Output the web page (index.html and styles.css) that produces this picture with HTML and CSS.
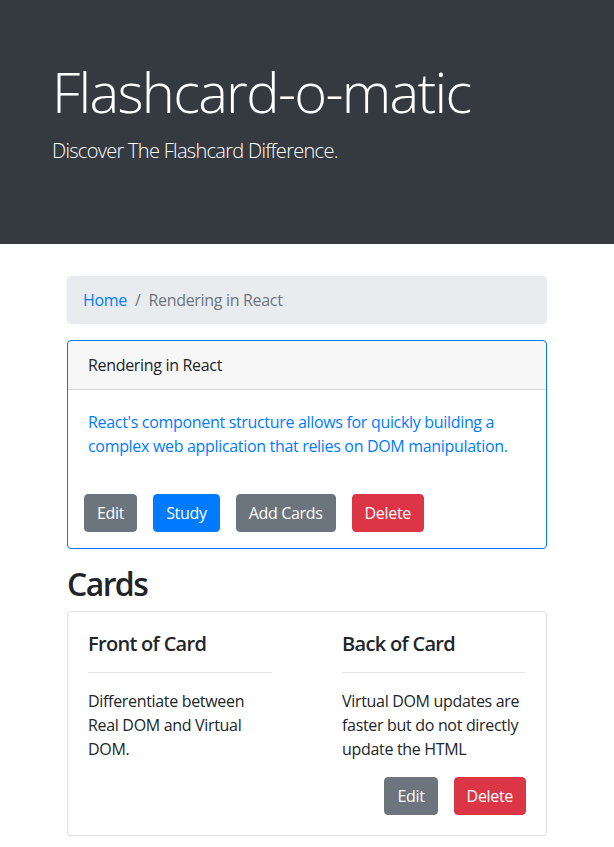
FILE: index.html
```html
<!DOCTYPE html>
<html lang="en">
<head>
<meta charset="utf-8">
<title>Flashcard-o-matic</title>
<link rel="stylesheet" href="styles.css">
</head>
<body>
<header class="jumbotron">
  <div class="jumbo-inner">
    <h1 class="display">Flashcard-o-matic</h1>
    <p class="lead">Discover The Flashcard Difference.</p>
  </div>
</header>
<main class="page">
  <nav class="breadcrumb">
    <a class="crumb-link" href="#">Home</a>
    <span class="crumb-sep">/</span>
    <span class="crumb-active">Rendering in React</span>
  </nav>

  <section class="card card-primary">
    <div class="card-header">Rendering in React</div>
    <div class="card-body">
      <p class="deck-desc">React's component structure allows for quickly building a complex web application that relies on DOM manipulation.</p>
      <div class="deck-actions">
        <button class="btn btn-secondary">Edit</button>
        <button class="btn btn-primary">Study</button>
        <button class="btn btn-secondary">Add Cards</button>
        <button class="btn btn-danger">Delete</button>
      </div>
    </div>
  </section>

  <h2 class="section-title">Cards</h2>

  <section class="card">
    <div class="card-body">
      <div class="card-cols">
        <div class="card-col">
          <h5 class="col-title">Front of Card</h5>
          <hr class="rule">
          <p class="col-text">Differentiate between Real DOM and Virtual DOM.</p>
        </div>
        <div class="card-col">
          <h5 class="col-title">Back of Card</h5>
          <hr class="rule">
          <p class="col-text">Virtual DOM updates are faster but do not directly update the HTML</p>
          <div class="card-actions">
            <button class="btn btn-secondary">Edit</button>
            <button class="btn btn-danger">Delete</button>
          </div>
        </div>
      </div>
    </div>
  </section>
</main>
</body>
</html>
```
FILE: styles.css
```css
*, *::before, *::after { box-sizing: border-box; }

html, body {
  margin: 0;
  padding: 0;
}

body {
  font-family: "Open Sans", "Noto Sans", "DejaVu Sans", sans-serif;
  font-size: 16px;
  line-height: 1.5;
  color: #212529;
  background: #fff;
  letter-spacing: -0.02em;
}

.jumbotron {
  background: #343a40;
  color: #fff;
  padding: 58px 0 62px;
  margin-bottom: 32px;
}

.jumbo-inner {
  max-width: 540px;
  margin: 0 auto;
  padding: 0 15px;
}

.display {
  margin: 0 0 11px;
  font-size: 56px;
  font-weight: 300;
  line-height: 1.2;
  letter-spacing: -0.03em;
}

.lead {
  margin: 0 0 16px;
  font-size: 20px;
  font-weight: 300;
  line-height: 1.5;
  letter-spacing: -0.035em;
}

.page {
  max-width: 540px;
  margin: 0 auto;
  padding: 0 30px;
}

.breadcrumb {
  display: flex;
  align-items: center;
  background: #e9ecef;
  border-radius: 4px;
  padding: 12px 16px;
  margin-bottom: 16px;
  color: #6c757d;
}

.crumb-link {
  color: #007bff;
  text-decoration: none;
}

.crumb-sep {
  padding: 0 8px;
  color: #6c757d;
}

.crumb-active { color: #6c757d; }

.card {
  border: 1px solid rgba(0,0,0,.125);
  border-radius: 4px;
  background: #fff;
  margin-bottom: 16px;
}

.card-primary { border-color: #007bff; }

.card-header {
  padding: 12px 20px;
  background: rgba(0,0,0,.03);
  border-bottom: 1px solid rgba(0,0,0,.125);
}

.card-body { padding: 20px; }

.deck-desc {
  margin: 0;
  color: #007bff;
}

.deck-actions {
  display: flex;
  gap: 16px;
  margin: 36px -4px -4px;
}

.btn {
  font-family: inherit;
  font-size: 16px;
  line-height: 1.5;
  letter-spacing: inherit;
  padding: 6px 12px;
  border: 1px solid transparent;
  border-radius: 4px;
  color: #fff;
  cursor: pointer;
}

.btn-secondary { background: #6c757d; border-color: #6c757d; }
.btn-primary { background: #007bff; border-color: #007bff; }
.btn-danger { background: #dc3545; border-color: #dc3545; }

.section-title {
  margin: 0 0 7px;
  font-size: 32px;
  font-weight: 600;
  line-height: 1.2;
  letter-spacing: -0.05em;
}

.card-cols {
  display: flex;
  justify-content: space-between;
}

.card-col { width: 42%; }

.col-title {
  margin: 0 0 8px;
  font-size: 20px;
  font-weight: 600;
  line-height: 1.2;
  letter-spacing: -0.035em;
}

.rule {
  margin: 16px 0;
  border: 0;
  border-top: 1px solid rgba(0,0,0,.1);
}

.col-text { margin: 0 0 16px; }

.card-actions {
  display: flex;
  justify-content: flex-end;
  gap: 16px;
}
```
